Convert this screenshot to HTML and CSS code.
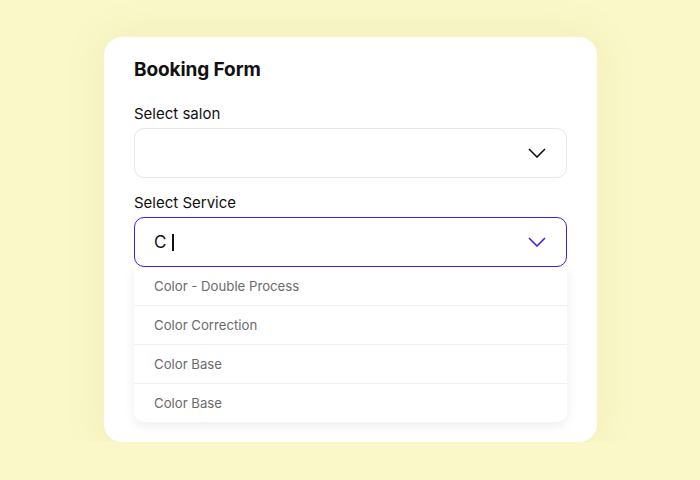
FILE: index.html
```html
<!DOCTYPE html>
<html>
<head>
    <meta charset="UTF-8" />
    <title>Booking Form</title>
    <link rel="stylesheet" href="styles.css">
</head>
<body>
<div class="card">
    <div class="title">Booking Form</div>

    <label class="label">Select salon</label>
    <div class="select">
        <span class="value"></span>
        <svg class="chevron" width="18" height="10" viewBox="0 0 18 10"><path d="M1 1 L9 9 L17 1" fill="none" stroke="#111" stroke-width="1.6"/></svg>
    </div>

    <label class="label">Select Service</label>
    <div class="combo">
        <div class="select focused">
            <span class="value">C<span class="caret"></span></span>
            <svg class="chevron" width="18" height="10" viewBox="0 0 18 10"><path d="M1 1 L9 9 L17 1" fill="none" stroke="#3a1ef0" stroke-width="1.6"/></svg>
        </div>
        <ul class="options">
            <li>Color - Double Process</li>
            <li>Color Correction</li>
            <li>Color Base</li>
            <li>Color Base</li>
        </ul>
    </div>
</div>
</body>
</html>
```

FILE: styles.css
```css
body {
    margin: 0;
    background-color: #faf8c9;
    font-family: Inter, "Open Sans", sans-serif;
    color: #111;
}

.card {
    width: 433px;
    margin: 37px 0 0 104px;
    padding: 21px 30px 20px 30px;
    background-color: white;
    border-radius: 18px;
    box-shadow: 0 0 40px 8px #f3f0bd;
}

.title {
    font-size: 19px;
    font-weight: 700;
    letter-spacing: -0.1px;
    line-height: 24px;
    margin-bottom: 23px;
}

.label {
    display: block;
    font-size: 15px;
    line-height: 18px;
    margin-bottom: 5px;
}

.select {
    height: 48px;
    border: 1px solid #e6e6e6;
    border-radius: 10px;
    display: flex;
    align-items: center;
    justify-content: space-between;
    padding: 0 20px 0 19px;
    margin-bottom: 16px;
}

.select.focused {
    border-color: #3a1ef0;
    margin-bottom: 0;
}

.value {
    font-size: 17px;
    display: flex;
    align-items: center;
}

.caret {
    display: inline-block;
    width: 2px;
    height: 17px;
    margin-left: 6px;
    background-color: #111;
}

.chevron {
    display: block;
}

.options {
    list-style: none;
    margin: 0;
    padding: 0;
    border-radius: 0 0 10px 10px;
    box-shadow: 0 4px 12px rgba(0, 0, 0, 0.07);
    background-color: white;
}

.options li {
    height: 38px;
    line-height: 38px;
    padding-left: 20px;
    font-size: 13.2px;
    color: #6b6b6b;
    border-bottom: 1px solid #f0f0f0;
}

.options li:last-child {
    border-bottom: none;
}
```
